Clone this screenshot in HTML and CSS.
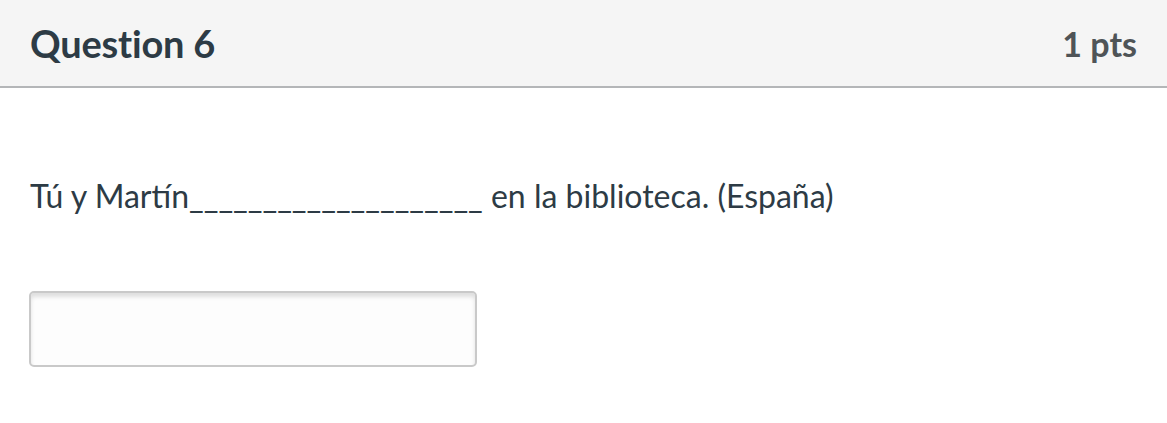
FILE: index.html
```html
<!DOCTYPE html>
<html>
<head>
<meta charset="utf-8">
<link rel="stylesheet" href="styles.css">
</head>
<body>
<div class="question">
  <div class="header">
    <h2 class="title">Question 6</h2>
    <div class="pts">1 pts</div>
  </div>
  <div class="content">
    <p class="text">Tú y Martín____________________ en la biblioteca. (España)</p>
    <div class="answer"><input class="input" type="text"></div>
  </div>
</div>
</body>
</html>
```

FILE: styles.css
```css
html, body { margin: 0; padding: 0; background: #fff; }
body { font-family: Lato, "Open Sans", sans-serif; color: #2d3b45; }
.header {
  height: 86px;
  background: #f5f5f5;
  border-bottom: 2px solid #b4b6b8;
  display: flex;
  align-items: center;
  justify-content: space-between;
  padding: 0 30px 0 30px;
}
.title { margin: 0; font-size: 38px; font-weight: 700; color: #2d3b45; letter-spacing: -0.2px; }
.pts { font-size: 34px; font-weight: 700; color: #4f5457; }
.content { padding: 0 30px; }
.text { margin: 0; padding-top: 88px; font-size: 32px; line-height: 40px; }
.answer { padding-top: 75px; }
.input {
  box-sizing: border-box;
  width: 448px;
  height: 76px;
  border: 2px solid #c9c9c9;
  border-radius: 5px;
  box-shadow: inset 0 4px 4px rgba(0,0,0,0.12);
  background: #fdfdfd;
  margin: 0 0 0 -1px;
  outline: none;
}
```
